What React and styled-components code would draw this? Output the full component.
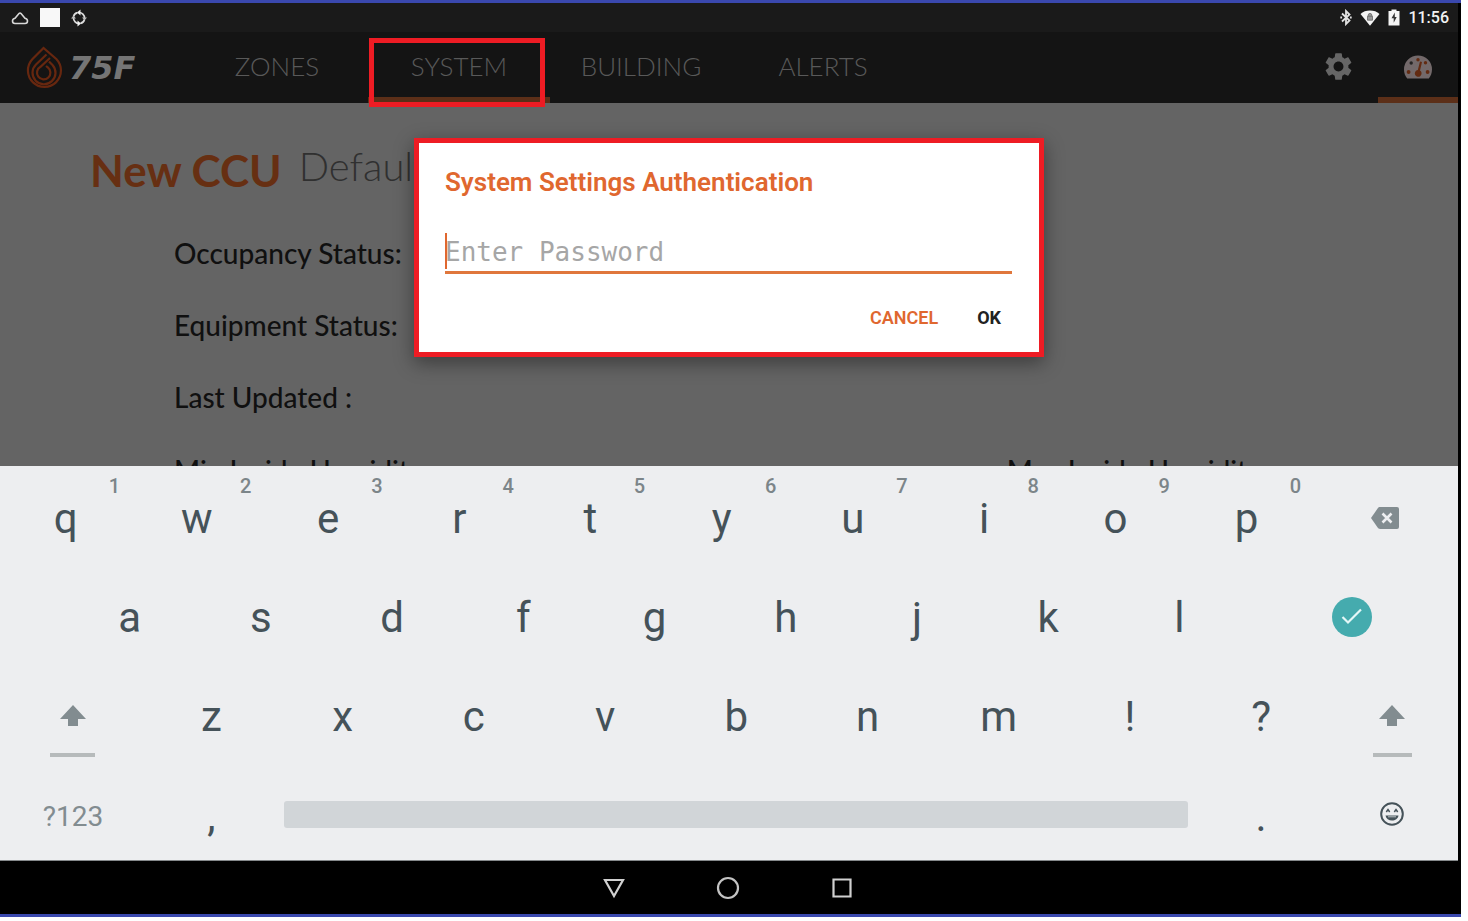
import React from "react";
import styled, { createGlobalStyle } from "styled-components";
import { MdSettings } from "react-icons/md";

const GlobalStyle = createGlobalStyle`
  * {
    box-sizing: border-box;
  }
  body {
    margin: 0;
    background: #fff;
    font-family: Roboto, "Liberation Sans", sans-serif;
  }
  button {
    border: 0;
    padding: 0;
    background: none;
    font: inherit;
    color: inherit;
    cursor: pointer;
  }
`;

const Page = styled.div`
  min-height: 100vh;
  display: flex;
  padding: 0 7px 4px 0;
`;

const Frame = styled.div`
  flex: 1;
  display: flex;
  border-top: 3px solid #3a48ae;
  border-bottom: 3px solid #3a48ae;
  background: #000;
  padding-right: 3px;
`;

const Screen = styled.div`
  position: relative;
  flex: 1;
  min-width: 0;
  display: flex;
  flex-direction: column;
`;

const StatusBar = styled.div`
  display: flex;
  align-items: center;
  justify-content: space-between;
  height: 29px;
  padding: 0 9px 0 11px;
  background: #1a1a1a;
  color: #f2f2f2;
`;

const StatusGroup = styled.div`
  display: flex;
  align-items: center;
  gap: ${(p) => p.$gap}px;
`;

const Clock = styled.time`
  font-size: 16px;
  font-weight: 500;
`;

const WhiteTile = styled.span`
  width: 20px;
  height: 19px;
  background: #f8f8f8;
`;

const TopNav = styled.header`
  display: flex;
  height: 71px;
  background: #141414;
`;

const Brand = styled.a`
  width: 186px;
  display: flex;
  align-items: center;
  gap: 6px;
  padding-left: 24px;
  color: #757575;
  font: italic 700 32px/1 "DejaVu Sans", sans-serif;
  text-decoration: none;
`;

const Tabs = styled.nav`
  flex: 1;
  display: flex;
`;

const Tab = styled.a`
  position: relative;
  width: 182px;
  display: flex;
  align-items: center;
  justify-content: center;
  padding-top: 2px;
  border-bottom: 6px solid ${(p) => (p.$active ? "#5c2f18" : "transparent")};
  color: #595959;
  font-family: Lato, sans-serif;
  font-size: 26px;
  font-weight: 300;
  text-decoration: none;
`;

const TabMark = styled.span`
  position: absolute;
  z-index: 1;
  inset: 6px 5px -10px 1px;
  border: 5px solid #ee1c24;
`;

const NavAction = styled.button`
  width: 80px;
  display: flex;
  align-items: center;
  justify-content: center;
  padding-top: 4px;
  border-bottom: 6px solid ${(p) => (p.$active ? "#5c2f18" : "transparent")};
  color: #666;
`;

const Content = styled.main`
  flex: 1 0 362px;
  height: 362px;
  overflow: hidden;
  padding: 40px 90px 0;
  background: #646464;
  font-family: Lato, sans-serif;
`;

const Heading = styled.div`
  display: flex;
  align-items: center;
  gap: 17px;
  height: 54px;
`;

const SiteName = styled.h1`
  margin: 0;
  color: #672f12;
  font-size: 44px;
  font-weight: 700;
  line-height: 54px;
`;

const ProfileName = styled.span`
  padding-bottom: 8px;
  color: #303030;
  font-size: 40px;
  font-weight: 300;
  line-height: 46px;
`;

const StatusList = styled.div`
  display: grid;
  grid-template-columns: 837fr 363fr;
  grid-template-rows: repeat(3, 72px) 74px;
  align-items: center;
  padding: 20px 0 0 84px;
  color: #101010;
  font-size: 28px;
  font-weight: 500;
`;

const StatusLabel = styled.span`
  grid-column: ${(p) => p.$col || 1};
  white-space: nowrap;
`;

const Overlay = styled.div`
  position: absolute;
  inset: 135px 0 auto;
  display: flex;
  justify-content: center;
`;

const Dialog = styled.form`
  width: 630px;
  max-width: 90%;
  padding: 22px 27px 22px 26px;
  border: 5px solid #ee1c24;
  background: #fff;
  box-shadow: 0 6px 18px rgba(0, 0, 0, 0.4);
`;

const DialogTitle = styled.label`
  display: block;
  color: #e0672f;
  font-size: 26px;
  font-weight: 600;
  line-height: 34px;
`;

const PasswordField = styled.div`
  position: relative;
  margin-top: 34px;
  &::before {
    content: "";
    position: absolute;
    left: 0;
    top: 0;
    width: 2px;
    height: 36px;
    background: #e0672f;
  }
`;

const PasswordInput = styled.input`
  display: block;
  width: 100%;
  height: 41px;
  padding: 0;
  border: 0;
  border-bottom: 3px solid #e0773c;
  outline: 0;
  background: none;
  font: 26px/34px "DejaVu Sans Mono", monospace;
  &::placeholder {
    color: #a6a6a6;
    opacity: 1;
  }
`;

const DialogActions = styled.div`
  display: flex;
  justify-content: flex-end;
  gap: 39px;
  margin-top: 32px;
  padding-right: 11px;
`;

const DialogButton = styled.button`
  color: ${(p) => (p.$primary ? "#222" : "#e0672f")};
  font-size: 18px;
  font-weight: ${(p) => (p.$primary ? 700 : 600)};
  line-height: 24px;
`;

const Keyboard = styled.section`
  background: #edeef0;
  color: #455259;
  border-bottom: 1px solid #85898b;
`;

const KeyRow = styled.div`
  display: grid;
  grid-template-columns: ${(p) => p.$cols};
  height: 99px;
  padding-left: ${(p) => p.$indent || 0}px;
`;

const Key = styled.button`
  position: relative;
  min-width: 0;
  display: flex;
  align-items: center;
  justify-content: center;
  padding-top: 6px;
  font-size: 42px;
  line-height: 50px;
`;

const ActionKey = styled(Key)`
  padding-top: 4px;
  color: #828c90;
  font-size: 28px;
`;

const KeyHint = styled.sup`
  position: absolute;
  top: 8px;
  right: 11px;
  color: #7c8589;
  font-size: 20px;
  font-weight: 500;
  line-height: 24px;
`;

const ShiftLine = styled.span`
  position: absolute;
  bottom: 6px;
  width: ${(p) => p.$width}px;
  height: 4px;
  background: #b6babb;
`;

const EnterDisc = styled.span`
  width: 40px;
  height: 40px;
  display: flex;
  align-items: center;
  justify-content: center;
  border-radius: 50%;
  background: #45abae;
`;

const BottomRow = styled(KeyRow)`
  height: 97px;
  ${Key} {
    padding-top: 10px;
  }
  ${Key}:last-child {
    padding-top: 4px;
  }
`;

const SpaceBar = styled.button`
  align-self: center;
  height: 27px;
  margin: 6px 8px 0 7px;
  border-radius: 3px;
  background: #d1d5d8;
`;

const SystemBar = styled.footer`
  display: flex;
  align-items: center;
  justify-content: center;
  gap: 90px;
  height: 53px;
  padding-right: 2px;
  background: #000;
  button {
    display: flex;
  }
`;

const CloudIcon = () => (
  <svg width="18" height="16" viewBox="0 0 18 16" fill="none" stroke="#d8d8d8" strokeWidth="1.6">
    <path d="M4 13.500C2.400 13.500 1.500 12.500 1.500 11c0-1.500.8-2.300 2.500-2.800L8 3.600c.6-.7 1.400-.7 2 0l4 4.600c1.700.5 2.500 1.300 2.500 2.800s-.9 2.500-2.500 2.500z" />
  </svg>
);

const RotateIcon = () => (
  <svg width="16" height="18" viewBox="0 0 16 18" fill="none" stroke="#dcdcdc" strokeWidth="1.7">
    <path d="M8 3.500A5.500 5.500 0 0 1 13.500 9M13.500 10.500A5.500 5.500 0 0 1 9.500 14.400M8 14.500A5.500 5.500 0 0 1 2.500 9M2.500 7.500A5.500 5.500 0 0 1 6.500 3.600" />
    <path d="M6 3.500 9.500.6v5.800zM10 14.500 6.500 11.600v5.800z" fill="#f2f2f2" stroke="none" />
    <path d="M11 8.500h5l-2.500 3zM5 9.500H0l2.500-3z" fill="#bdbdbd" stroke="none" />
  </svg>
);

const BluetoothIcon = () => (
  <svg width="12" height="17" viewBox="0 0 12 17" fill="none" stroke="#e2e2e2" strokeWidth="1.8">
    <path d="m2 4.500 7.500 7L6 15V2l3.500 3.500L2 12.500" />
    <path d="M.3 8.500h1.800M9.900 8.500h1.800" />
  </svg>
);

const WifiIcon = () => (
  <svg width="20" height="16" viewBox="0 0 20 16">
    <path d="M.5 4C3 1.600 6.200.5 10 .5S17 1.600 19.500 4L10 15.800z" fill="#f4f4f4" />
    <path d="M8.200 6.300V5.200a1.800 1.800 0 0 1 3.600 0v1.100M7.500 6.200h5v4h-5z" fill="#999" stroke="#666" strokeWidth=".8" />
  </svg>
);

const BatteryIcon = () => (
  <svg width="12" height="17" viewBox="0 0 12 17">
    <path d="M.5 2h3V.5h5V2h3v14.500H.5z" fill="#f4f4f4" />
    <path d="M6.800 3.500 3.500 9.300h2.200v4.400l3-5.800H6.800z" fill="#333" />
  </svg>
);

const DropLogo = () => (
  <svg width="39" height="44" viewBox="0 0 39 44" fill="none" stroke="#67270f" strokeWidth="2.200">
    <path d="M19.500 2 8.300 13.300a16.500 16.500 0 1 0 24-.3L19.500 2z" />
    <path d="M22.500 8.500 12 18.500a11.500 11.500 0 1 0 16.500.5L25 15.500" />
    <path d="M26 12 16.500 20.800a6.700 6.700 0 1 0 7.300.6L22 20" />
  </svg>
);

const GaugeIcon = () => (
  <svg width="30" height="26" viewBox="0 0 30 26">
    <path d="M4.200 24.500C2.200 22 1 19 1 15.500a14 14 0 0 1 28 0c0 3.500-1.200 6.500-3.200 9z" fill="#73696a" />
    <g fill="#632b12">
      <circle cx="15" cy="5.800" r="1.700" />
      <circle cx="8.200" cy="9" r="1.700" fill="#252323" />
      <circle cx="5.600" cy="18" r="1.900" />
      <circle cx="22.500" cy="8.800" r="1.700" />
      <circle cx="24.600" cy="18" r="1.900" />
      <path d="m17 7.500 2 .5-2 8.500a3.400 3.400 0 1 1-2.200-.5z" />
    </g>
  </svg>
);

const ShiftIcon = () => (
  <svg width="26" height="21" viewBox="0 0 26 21" fill="currentColor">
    <path d="M13 0 26 14h-8v7H8v-7H0z" />
  </svg>
);

const BackspaceIcon = () => (
  <svg width="28" height="22" viewBox="0 0 28 22">
    <path d="M9 0h17a2 2 0 0 1 2 2v18a2 2 0 0 1-2 2H9c-1 0-1.700-.5-2.200-1.200L0 11l6.800-9.800C7.300.5 8 0 9 0z" fill="currentColor" />
    <path d="m11.500 6.500 9 9m0-9-9 9" stroke="#edeef0" strokeWidth="2.600" />
  </svg>
);

const CheckIcon = () => (
  <svg width="22" height="18" viewBox="0 0 22 18" fill="none" stroke="#e4f7f7" strokeWidth="2.200">
    <path d="m1.500 9 5.500 5.500L20 1.500" />
  </svg>
);

const EmojiIcon = () => (
  <svg width="24" height="24" viewBox="0 0 24 24" fill="none" stroke="#455259" strokeWidth="2">
    <circle cx="12" cy="12" r="10.800" />
    <path d="M6.300 10 8 7.500 9.700 10M14.300 10 16 7.500l1.700 2.500" strokeWidth="1.500" />
    <path d="M5.500 13.500h13c-.6 3.200-3.300 5-6.500 5s-5.900-1.800-6.500-5z" fill="#455259" stroke="none" />
    <path d="M8 14.800h8" stroke="#b9c0c4" strokeWidth="1" />
  </svg>
);

const tabs = ["ZONES", "SYSTEM", "BUILDING", "ALERTS"];
const statusLabels = ["Occupancy Status:", "Equipment Status:", "Last Updated :"];

const rowOne = "qwertyuiop".split("");
const rowTwo = "asdfghjkl".split("");
const rowThree = "zxcvbnm!?".split("");

const App = () => {
  return (
    <>
      <GlobalStyle />
      <Page>
        <Frame>
          <Screen>
            <StatusBar>
              <StatusGroup $gap={11}>
                <CloudIcon />
                <WhiteTile />
                <RotateIcon />
              </StatusGroup>
              <StatusGroup $gap={8}>
                <BluetoothIcon />
                <WifiIcon />
                <BatteryIcon />
                <Clock>11:56</Clock>
              </StatusGroup>
            </StatusBar>

            <TopNav>
              <Brand href="#home">
                <DropLogo />
                75F
              </Brand>
              <Tabs>
                {tabs.map((tab) => (
                  <Tab key={tab} href={`#${tab.toLowerCase()}`} $active={tab === "SYSTEM"}>
                    {tab}
                    {tab === "SYSTEM" && <TabMark />}
                  </Tab>
                ))}
              </Tabs>
              <NavAction aria-label="Settings">
                <MdSettings size={33} />
              </NavAction>
              <NavAction aria-label="Dashboard" $active>
                <GaugeIcon />
              </NavAction>
            </TopNav>

            <Content>
              <Heading>
                <SiteName>New CCU</SiteName>
                <ProfileName>Default</ProfileName>
              </Heading>
              <StatusList>
                {statusLabels.map((label) => (
                  <StatusLabel key={label}>{label}</StatusLabel>
                ))}
                <StatusLabel>Min Inside Humidity</StatusLabel>
                <StatusLabel $col={2}>Max Inside Humidity</StatusLabel>
              </StatusList>
            </Content>

            <Keyboard aria-label="Keyboard">
              <KeyRow $cols="repeat(10, 9fr) 10fr">
                {rowOne.map((letter, i) => (
                  <Key key={letter}>
                    {letter}
                    <KeyHint>{(i + 1) % 10}</KeyHint>
                  </Key>
                ))}
                <ActionKey aria-label="Backspace">
                  <BackspaceIcon />
                </ActionKey>
              </KeyRow>
              <KeyRow $cols="repeat(9, 90fr) 146fr" $indent={64}>
                {rowTwo.map((letter) => (
                  <Key key={letter}>{letter}</Key>
                ))}
                <ActionKey aria-label="Enter">
                  <EnterDisc>
                    <CheckIcon />
                  </EnterDisc>
                </ActionKey>
              </KeyRow>
              <KeyRow $cols="10fr repeat(10, 9fr)">
                <ActionKey aria-label="Left shift">
                  <ShiftIcon />
                  <ShiftLine $width={45} />
                </ActionKey>
                {rowThree.map((letter) => (
                  <Key key={letter}>{letter}</Key>
                ))}
                <ActionKey aria-label="Right shift">
                  <ShiftIcon />
                  <ShiftLine $width={39} />
                </ActionKey>
              </KeyRow>
              <BottomRow $cols="10fr 9fr 63fr 9fr 9fr">
                <ActionKey>?123</ActionKey>
                <Key>,</Key>
                <SpaceBar aria-label="Space" />
                <Key>.</Key>
                <ActionKey aria-label="Emoji">
                  <EmojiIcon />
                </ActionKey>
              </BottomRow>
            </Keyboard>

            <SystemBar>
              <button aria-label="Back">
                <svg width="24" height="22" viewBox="0 0 24 22" fill="none" stroke="#d0d0d0" strokeWidth="2.200">
                  <path d="M3 3h18l-9 16z" />
                </svg>
              </button>
              <button aria-label="Home">
                <svg width="24" height="24" viewBox="0 0 24 24" fill="none" stroke="#c4c4c4" strokeWidth="2.200">
                  <circle cx="12" cy="12" r="10" />
                </svg>
              </button>
              <button aria-label="Recent apps">
                <svg width="24" height="24" viewBox="0 0 24 24" fill="none" stroke="#d0d0d0" strokeWidth="2.200">
                  <path d="M3.500 3.500h17v17h-17z" />
                </svg>
              </button>
            </SystemBar>

            <Overlay>
              <Dialog role="dialog" onSubmit={(e) => e.preventDefault()}>
                <DialogTitle htmlFor="password">System Settings Authentication</DialogTitle>
                <PasswordField>
                  <PasswordInput id="password" type="password" placeholder="Enter Password" />
                </PasswordField>
                <DialogActions>
                  <DialogButton type="button">CANCEL</DialogButton>
                  <DialogButton type="submit" $primary>
                    OK
                  </DialogButton>
                </DialogActions>
              </Dialog>
            </Overlay>
          </Screen>
        </Frame>
      </Page>
    </>
  );
};

export default App;
